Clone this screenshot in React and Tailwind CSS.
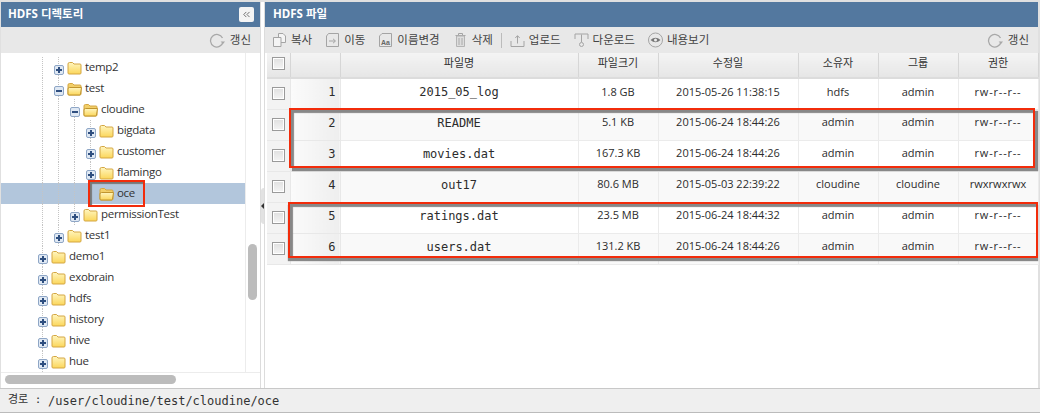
import { ChevronsLeft } from 'lucide-react'

const treeRows = [
  { name: 'temp2', level: 2, state: 'closed' },
  { name: 'test', level: 2, state: 'open' },
  { name: 'cloudine', level: 3, state: 'open' },
  { name: 'bigdata', level: 4, state: 'closed' },
  { name: 'customer', level: 4, state: 'closed' },
  { name: 'flamingo', level: 4, state: 'closed' },
  { name: 'oce', level: 4, state: 'leaf', selected: true },
  { name: 'permissionTest', level: 3, state: 'closed' },
  { name: 'test1', level: 2, state: 'closed' },
  { name: 'demo1', level: 1, state: 'closed' },
  { name: 'exobrain', level: 1, state: 'closed' },
  { name: 'hdfs', level: 1, state: 'closed' },
  { name: 'history', level: 1, state: 'closed' },
  { name: 'hive', level: 1, state: 'closed' },
  { name: 'hue', level: 1, state: 'closed' },
]

const files = [
  { no: 1, name: '2015_05_log', size: '1.8 GB', date: '2015-05-26 11:38:15', owner: 'hdfs', group: 'admin', perm: 'rw-r--r--' },
  { no: 2, name: 'README', size: '5.1 KB', date: '2015-06-24 18:44:26', owner: 'admin', group: 'admin', perm: 'rw-r--r--' },
  { no: 3, name: 'movies.dat', size: '167.3 KB', date: '2015-06-24 18:44:26', owner: 'admin', group: 'admin', perm: 'rw-r--r--' },
  { no: 4, name: 'out17', size: '80.6 MB', date: '2015-05-03 22:39:22', owner: 'cloudine', group: 'cloudine', perm: 'rwxrwxrwx' },
  { no: 5, name: 'ratings.dat', size: '23.5 MB', date: '2015-06-24 18:44:32', owner: 'admin', group: 'admin', perm: 'rw-r--r--' },
  { no: 6, name: 'users.dat', size: '131.2 KB', date: '2015-06-24 18:44:26', owner: 'admin', group: 'admin', perm: 'rw-r--r--' },
]

const monoFont = "font-['DejaVu_Sans_Mono','Noto_Sans_CJK_KR',monospace]"

function Folder({ open }) {
  return (
    <svg width="15" height="14" viewBox="0 0 15 14" className="shrink-0">
      <defs>
        <linearGradient id="folderFill" x1="0" y1="0" x2="0" y2="1">
          <stop offset="0" stopColor="#fff6c0" />
          <stop offset="1" stopColor="#fbd65a" />
        </linearGradient>
      </defs>
      <path d="M1 3 Q1 1.5 2.5 1.5 H5.5 L7 3 H13 Q14 3 14 4 V12 Q14 13 13 13 H2 Q1 13 1 12 Z" fill={open ? '#f2cf68' : 'url(#folderFill)'} stroke="#d4a642" />
      {open && <path d="M1 7 Q1 5.5 2.5 5.5 H14.5 L13.5 12 Q13.2 13 12.5 13 H2 Q1 13 1 12 Z" fill="url(#folderFill)" stroke="#c0952f" />}
    </svg>
  )
}

function Toggle({ open }) {
  return (
    <span className="absolute left-0 top-[8px] w-[10px] h-[10px] rounded-[2px] border border-[#8ea6c6] bg-[#dfe8f3] flex items-center justify-center">
      <span className="relative block w-[6px] h-[2px] bg-[#2f4f80]">
        {!open && <span className="absolute left-[2px] top-[-2px] w-[2px] h-[6px] bg-[#2f4f80]" />}
      </span>
    </span>
  )
}

function Guide() {
  return <span className="block h-full w-4 shrink-0 pl-1"><span className="block h-full border-l border-dotted border-[#c4c4c4]" /></span>
}

function TreeRow({ row }) {
  const guides = Array.from({ length: row.level - 1 })
  return (
    <div className={`relative flex items-center h-[21px] pl-[37px] ${row.selected ? 'bg-[#b2c6dc]' : ''}`}>
      {guides.map((_, i) => <Guide key={i} />)}
      {row.state === 'leaf'
        ? <span className="relative w-[13px] h-full shrink-0" />
        : (
          <span className="relative w-[13px] h-full shrink-0">
            <span className="absolute left-[4px] top-0 h-full border-l border-dotted border-[#c4c4c4]" />
            <Toggle open={row.state === 'open'} />
          </span>
        )}
      <Folder open={row.state !== 'closed'} />
      <span className="ml-[3px] pb-[2px] text-[11.5px] tracking-[-0.3px] text-[#333] whitespace-nowrap">{row.name}</span>
      {row.selected && (
        <span className="absolute left-[87px] top-[-3px] w-[57px] h-[27px] border-2 border-[#f22c0b] shadow-[inset_2px_2px_1px_#777]" />
      )}
    </div>
  )
}

function Refresh() {
  return (
    <span className="flex items-center gap-[5px] text-[11.5px] text-[#444]">
      <svg width="16" height="16" viewBox="0 0 16 16">
        <path d="M13.5 6 A6.3 6.3 0 1 0 14 10" fill="none" stroke="#a8a8a8" strokeWidth="1.3" />
        <path d="M11.6 9.5 L16 9.5 L14 12 Z" fill="#a8a8a8" />
      </svg>
      갱신
    </span>
  )
}

function ToolIcon({ type }) {
  const s = { fill: 'none', stroke: '#a4a4a4', strokeWidth: 1 }
  return (
    <svg width="15" height="16" viewBox="0 0 15 16" className="shrink-0">
      {type === 'copy' && <>
        <path d="M6.5 1.5 H11 L13.5 4 V10.5 H6.5 Z" fill="#f4f4f4" stroke="#a4a4a4" />
        <path d="M1.5 5.5 H5 L9 5.5 V14.5 H1.5 Z" fill="#f4f4f4" stroke="#a4a4a4" />
      </>}
      {type === 'move' && <>
        <path d="M3.5 1.5 H13.5 V14.5 H1.5 V4 Z" {...s} />
        <path d="M4 9 H10 M8 6.8 L10.5 9 L8 11.2" {...s} />
      </>}
      {type === 'rename' && <>
        <path d="M4 1.5 H13.5 V14.5 H1.5 V4 Z" {...s} />
        <text x="3" y="12.5" fontSize="7" fontWeight="700" fill="#666" fontFamily="Liberation Sans">Aa</text>
      </>}
      {type === 'trash' && <>
        <path d="M2.5 3.5 H12.5 M5.5 3 V1.5 H9.5 V3" {...s} />
        <path d="M3.5 4 H11.5 V14.5 H3.5 Z" fill="#ddd" stroke="#b4b4b4" />
        <path d="M6 6 V13 M9 6 V13" stroke="#aaa" />
      </>}
      {type === 'upload' && <>
        <path d="M1 9 V14.5 H14 V9" {...s} />
        <path d="M7.5 11.5 V4 M5.3 6 L7.5 3.6 L9.7 6" {...s} />
      </>}
      {type === 'download' && <>
        <path d="M1 7 V2 H14 V7" {...s} />
        <path d="M7.5 2.5 V10" {...s} />
        <circle cx="7.5" cy="12.5" r="2" {...s} />
      </>}
      {type === 'eye' && <>
        <circle cx="7.5" cy="8" r="7" {...s} />
        <path d="M2.5 8 Q7.5 3.5 12.5 8 Q7.5 12.5 2.5 8 Z" fill="#777" />
        <circle cx="7.5" cy="8" r="1.5" fill="#eee" />
      </>}
    </svg>
  )
}

function ToolButton({ type, label }) {
  return (
    <span className="flex items-center gap-[4px] text-[11.5px] text-[#444] whitespace-nowrap">
      <ToolIcon type={type} />
      {label}
    </span>
  )
}

function Check() {
  return <span className="block mx-auto w-[13px] h-[13px] border border-[#9a9a9a] bg-gradient-to-b from-[#e0e0e0] to-[#f4f4f4] shadow-[inset_0_0_0_1px_#fff]" />
}

function Head({ children, className = '' }) {
  return <th className={`h-[25px] p-0 pb-[3px] font-normal text-[11px] text-[#333] border-r border-b-2 border-r-[#d6d6d6] border-b-[#dcdcdc] bg-gradient-to-b from-[#f4f4f4] to-[#e6e6e6] ${className}`}>{children}</th>
}

function FileRow({ file }) {
  const stripe = file.no % 2 === 0 ? 'bg-[#f9f9f9]' : 'bg-white'
  const cell = 'p-0 pb-[4px] text-center border-r border-b border-[#ebebeb]'
  return (
    <tr className={`h-[31px] text-[11px] text-[#2c2c2c] ${stripe}`}>
      <td className="p-0 bg-[#f3f3f3] border-r border-b border-[#e8e8e8]"><Check /></td>
      <td className={`p-0 pb-[4px] pr-[4px] text-[12px] text-right border-r border-b border-[#e8e8e8] bg-gradient-to-r from-[#fbfbfb] to-[#eeeeee] ${monoFont}`}>{file.no}</td>
      <td className={`${cell} text-[12px] ${monoFont}`}>{file.name}</td>
      <td className={cell}>{file.size}</td>
      <td className={cell}>{file.date}</td>
      <td className={cell}>{file.owner}</td>
      <td className={cell}>{file.group}</td>
      <td className={`${cell} ${file.perm.includes('-') ? 'tracking-[0.8px]' : ''}`}>{file.perm}</td>
    </tr>
  )
}

export default function App() {
  return (
    <div className="w-[1040px] h-[413px] overflow-hidden flex flex-col bg-[#e0e0e0] pt-[2px] font-['Open_Sans','Noto_Sans_CJK_KR',sans-serif]">
      <div className="flex-1 min-h-0 flex">
        {/* directory tree */}
        <aside className="w-[259px] ml-px shrink-0 flex flex-col bg-white">
          <div className="h-[25px] shrink-0 bg-[#53789f] flex items-center justify-between pl-[7px] pr-[6px] text-white text-[11.5px] font-bold">
            <span className="pb-[2px]">HDFS 디렉토리</span>
            <span className="w-[15px] h-[15px] rounded-[2px] bg-[#f4f4f4] text-[#666] flex items-center justify-center">
              <ChevronsLeft size={11} strokeWidth={2} />
            </span>
          </div>
          <div className="h-[26px] shrink-0 bg-[#e8e8e8] flex items-center justify-end pr-[9px]"><Refresh /></div>
          <div className="flex-1 min-h-0 flex flex-col">
            <div className="flex-1 min-h-0 flex">
              <div className="w-[244px] shrink-0 overflow-hidden pt-[4px]">
                {treeRows.map(row => <TreeRow key={row.name} row={row} />)}
                <div className="h-[21px] pl-[41px]"><span className="block h-full border-l border-dotted border-[#c4c4c4]" /></div>
              </div>
              <div className="flex-1 border-l border-[#ececec] bg-white pt-[191px] pl-[2px]">
                <div className="w-[9px] h-[56px] rounded-full bg-[#bcbcbc]" />
              </div>
            </div>
            <div className="h-[16px] shrink-0 border-t border-[#ececec] pt-[2px] pl-[4px]">
              <div className="w-[171px] h-[9px] rounded-full bg-[#bcbcbc]" />
            </div>
          </div>
        </aside>

        {/* splitter */}
        <div className="w-[5px] shrink-0 flex items-center bg-white border-x border-[#dcdcdc] pt-[22px]">
          <div className="w-[3px] h-[36px] bg-[#e2e2e2] rounded-l-[3px] flex items-center justify-center">
            <span className="border-y-[3px] border-r-[3px] border-y-transparent border-r-[#333]" />
          </div>
        </div>

        {/* file list */}
        <main className="w-[773px] shrink-0 flex flex-col bg-white">
          <div className="h-[25px] shrink-0 bg-[#53789f] flex items-center pl-[8px] text-white text-[11.5px] font-bold">
            <span className="pb-[2px]">HDFS 파일</span>
          </div>
          <div className="h-[26px] shrink-0 bg-[#e8e8e8] flex items-center pl-[7px] pr-[9px]">
            <div className="flex items-center gap-[13px]">
              <ToolButton type="copy" label="복사" />
              <ToolButton type="move" label="이동" />
              <ToolButton type="rename" label="이름변경" />
              <ToolButton type="trash" label="삭제" />
              <span className="w-px h-[15px] bg-[#bbb] -mx-[5px]" />
              <ToolButton type="upload" label="업로드" />
              <ToolButton type="download" label="다운로드" />
              <ToolButton type="eye" label="내용보기" />
            </div>
            <div className="ml-auto"><Refresh /></div>
          </div>
          <div className="relative flex-1 min-h-0 pl-[2px]">
            <table className="table-fixed w-[771px] border-collapse">
              <colgroup>
                <col className="w-[23px]" />
                <col className="w-[50px]" />
                <col className="w-[238px]" />
                <col className="w-[80px]" />
                <col className="w-[140px]" />
                <col className="w-[80px]" />
                <col className="w-[80px]" />
                <col className="w-[80px]" />
              </colgroup>
              <thead>
                <tr>
                  <Head><Check /></Head>
                  <Head />
                  <Head>파일명</Head>
                  <Head>파일크기</Head>
                  <Head>수정일</Head>
                  <Head>소유자</Head>
                  <Head>그룹</Head>
                  <Head>권한</Head>
                </tr>
              </thead>
              <tbody>
                {files.map(f => <FileRow key={f.no} file={f} />)}
              </tbody>
            </table>
            {/* red callouts */}
            <div className="absolute left-[24px] top-[55px] w-[746px] h-[60px] border-2 border-[#f22c0b] shadow-[3px_3px_1px_#888,inset_3px_3px_1px_#888]" />
            <div className="absolute left-[23px] top-[149px] w-[750px] h-[56px] border-2 border-[#f22c0b] shadow-[0_3px_1px_#888,inset_3px_3px_1px_#888]" />
          </div>
        </main>
      </div>

      <footer className={`h-[25px] shrink-0 bg-[#efefef] border-t border-[#c8c8c8] border-b border-b-[#bbb] pl-[8px] flex items-center text-[12px] text-[#333] ${monoFont}`}>
        <span className="text-[11px]">경로 :&nbsp;</span>/user/cloudine/test/cloudine/oce
      </footer>
    </div>
  )
}
